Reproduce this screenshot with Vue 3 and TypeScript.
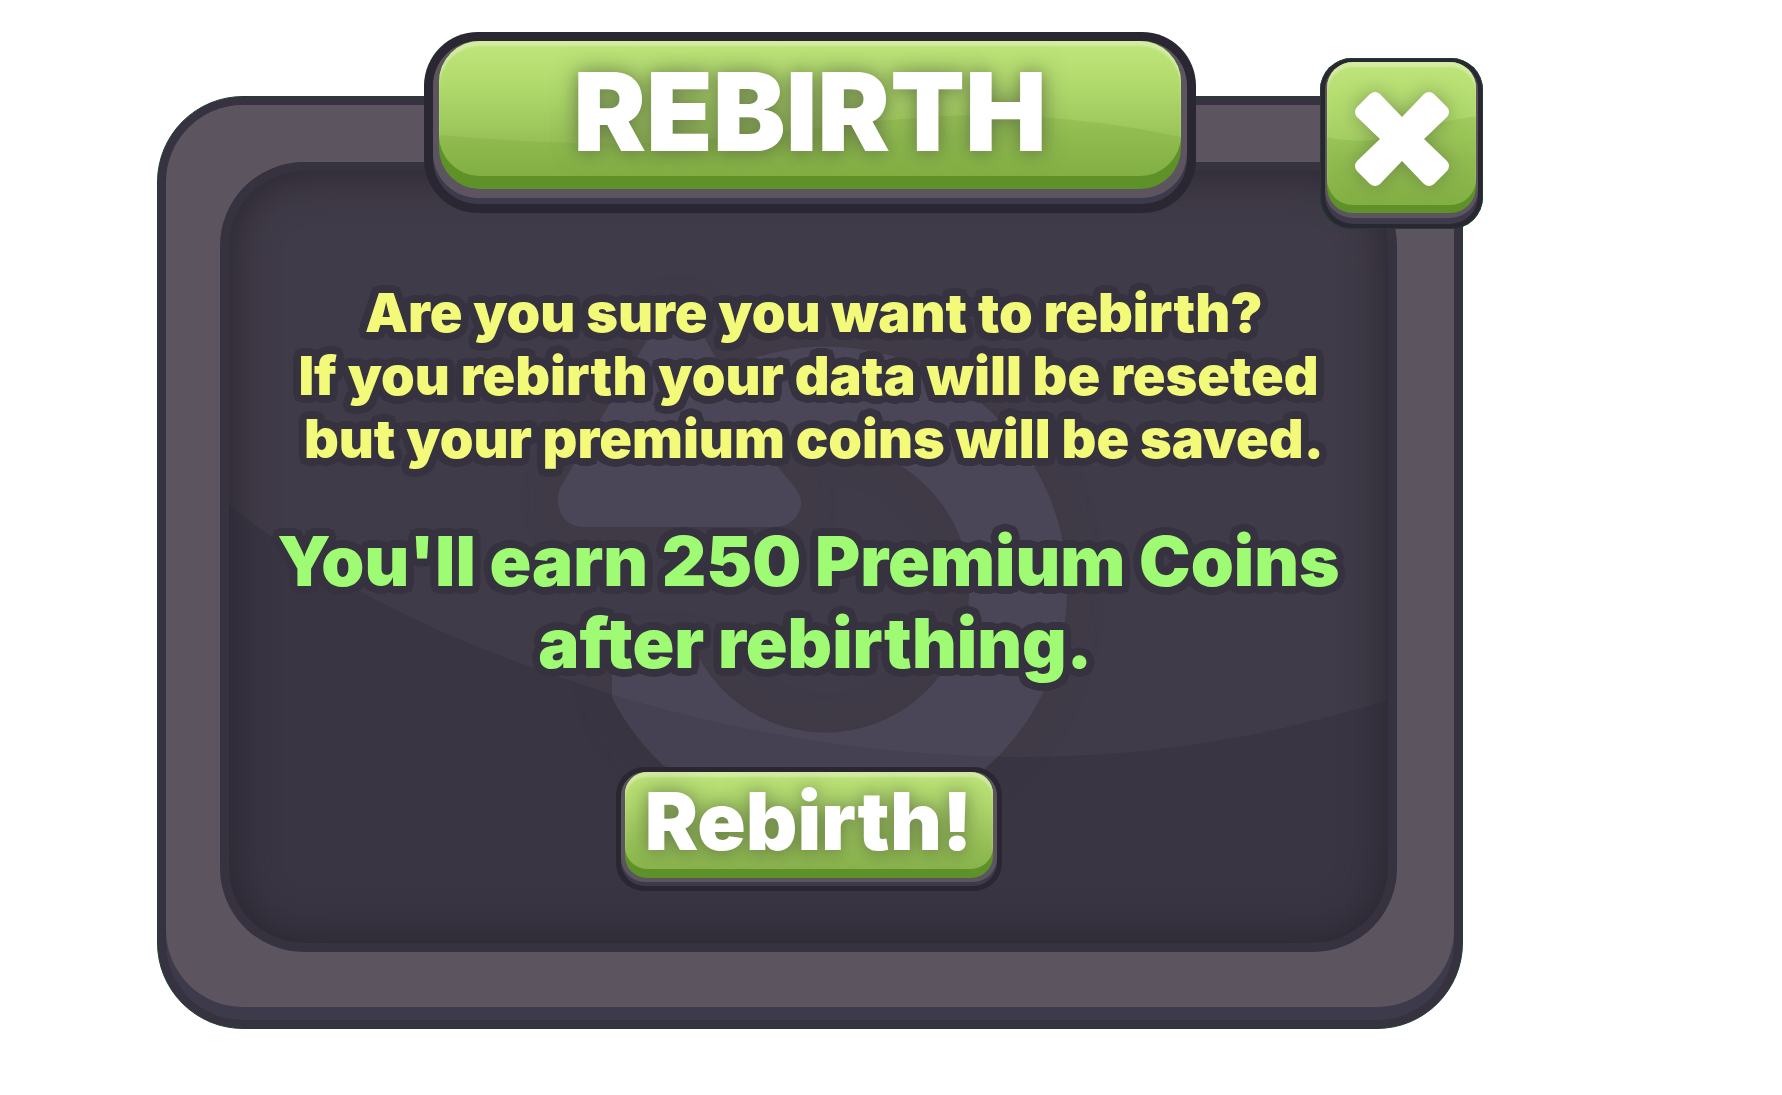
<script setup lang="ts">
import { ref } from 'vue'

const open = ref(true)
const premiumCoins = ref(250)

const warning: string[] = [
  ' Are you sure you want to rebirth?',
  'If you rebirth your data will be reseted',
  ' but your premium coins will be saved.',
]

function close(): void {
  open.value = false
}

function rebirth(): void {
  premiumCoins.value += 250
}
</script>

<template>
  <main class="page">
    <section v-if="open" class="dialog" role="dialog" aria-labelledby="dialog-title">
      <div class="frame">
        <div class="frame-lip">
          <div class="frame-face">
            <div class="well">
              <svg class="well-art" viewBox="0 0 1159 772" preserveAspectRatio="none" aria-hidden="true">
                <g class="watermark" transform="translate(-229 -171)">
                  <path d="M593 527 A241 241 0 1 1 612 698 V650 H695 A144 144 0 1 0 695 527 Z" />
                  <path
                    d="M584 527 Q566 527 560 511 Q554 496 564 481 L656 325 Q677 296 698 325 L714 355 L777 466 L794 486 Q805 500 799 512 Q792 527 774 527 Z"
                  />
                </g>
                <path
                  class="sheen"
                  d="M0 0 V334 C120 430 260 485 385 524 C520 565 660 586 794 586 C920 586 1040 566 1159 529 V0 Z"
                />
              </svg>
              <div class="content">
                <p class="warning">
                  <span v-for="line in warning" :key="line" class="line">{{ line }}</span>
                </p>
                <p class="reward">
                  <span class="line">You'll earn {{ premiumCoins }} Premium Coins</span>
                  <span class="line">{{ ' after rebirthing.' }}</span>
                </p>
                <button type="button" class="plate plate-action" @click="rebirth">
                  <span class="lip"><span class="rim"><span class="base"><span class="face">
                    <span class="label">Rebirth!</span>
                  </span></span></span></span>
                </button>
              </div>
            </div>
          </div>
        </div>
      </div>

      <header class="plate plate-title">
        <div class="lip"><div class="rim"><div class="base"><div class="face">
          <svg class="swoosh" viewBox="0 0 740 135" preserveAspectRatio="none" aria-hidden="true">
            <path d="M0 94 Q110 104 200 102 C330 98 420 76 540 74 Q640 74 740 96 V135 H0 Z" />
          </svg>
          <h1 id="dialog-title" class="label">REBIRTH</h1>
        </div></div></div></div>
      </header>

      <button type="button" class="plate plate-close" aria-label="Close" @click="close">
        <span class="lip"><span class="rim"><span class="base"><span class="face">
          <svg class="swoosh" viewBox="0 0 150 142" preserveAspectRatio="none" aria-hidden="true">
            <path d="M0 75 Q30 81 60 76 Q110 58 150 54 V142 H0 Z" />
          </svg>
          <svg class="cross" viewBox="0 0 94 94" aria-hidden="true">
            <path
              d="M15 2 Q20 -2 25 2 L47 25 L69 2 Q74 -2 79 2 L92 15 Q96 20 92 25 L69 47 L92 69 Q96 74 92 79 L79 92 Q74 96 69 92 L47 69 L25 92 Q20 96 15 92 L2 79 Q-2 74 2 69 L25 47 L2 25 Q-2 20 2 15 Z"
            />
          </svg>
        </span></span></span></span>
      </button>
    </section>
  </main>
</template>

<style>
body {
  margin: 0;
  background: #ffffff;
}
</style>

<style scoped>
.page {
  box-sizing: border-box;
  padding: 96px 319px 67px 157px;
  font-family: Inter, "Open Sans", "Liberation Sans", sans-serif;
  font-weight: 900;
}

.dialog {
  position: relative;
}

/* Outer frame */
.frame {
  padding: 8px;
  border: 1px solid #1f4030;
  border-radius: 86px;
  background: #363240;
}

.frame-lip {
  padding-bottom: 13px;
  border-radius: 77px;
  background: #3d3b4b;
}

.frame-face {
  padding: 57px 57px 55px 54px;
  border-radius: 77px;
  background: #5c5560;
}

.well {
  position: relative;
  overflow: hidden;
  border: 9px solid #36323f;
  border-radius: 84px;
  background: #3a3543;
}

.well::after {
  content: "";
  position: absolute;
  inset: 0;
  border-radius: 75px;
  box-shadow: inset 0 0 40px 4px rgba(38, 34, 42, 0.8);
  pointer-events: none;
}

.well-art {
  position: absolute;
  inset: 0;
  width: 100%;
  height: 100%;
}

.watermark {
  fill: #454052;
  filter: drop-shadow(0 0 16px rgba(54, 50, 54, 0.5));
}

.sheen {
  fill: rgba(255, 255, 255, 0.03);
}

/* Text */
.content {
  position: relative;
  z-index: 1;
  display: flex;
  flex-direction: column;
  align-items: center;
  padding: 110px 0 52px;
}

.warning,
.reward {
  margin: 0;
  text-align: center;
  white-space: pre;
  text-shadow:
    8px 0 #36323f, 7px 3px #36323f, 6px 6px #36323f, 3px 7px #36323f,
    0 8px #36323f, -3px 7px #36323f, -6px 6px #36323f, -7px 3px #36323f,
    -8px 0 #36323f, -7px -3px #36323f, -6px -6px #36323f, -3px -7px #36323f,
    0 -8px #36323f, 3px -7px #36323f, 6px -6px #36323f, 7px -3px #36323f,
    4px 0 #36323f, -4px 0 #36323f, 0 4px #36323f, 0 -4px #36323f;
}

.line {
  display: block;
}

.warning {
  color: #f3fa79;
  font-size: 54px;
  line-height: 63px;
}

.reward {
  margin-top: 50px;
  color: #a0fb74;
  font-size: 69px;
  line-height: 82px;
}

/* Raised green plates */
.plate {
  box-sizing: border-box;
  margin: 0;
  border: 0;
  background: #2a2733;
  font: inherit;
  color: #ffffff;
}

.plate span {
  display: block;
}

.plate .lip {
  background: #3d3b4b;
}

.plate .rim {
  background: #5c5560;
}

.plate .base {
  background: #5e9229;
}

.plate .face {
  position: relative;
  display: flex;
  align-items: center;
  justify-content: center;
  overflow: hidden;
  background: linear-gradient(#bfe67a, #b0d96c 35%, #97c057 75%, #8ab44c);
  box-shadow: inset 0 5px 2px rgba(225, 240, 190, 0.6);
}

.swoosh {
  position: absolute;
  inset: 0;
  width: 100%;
  height: 100%;
  fill: rgba(100, 155, 35, 0.18);
}

.plate .label {
  position: relative;
  margin: 0;
  font-weight: 900;
  white-space: nowrap;
  text-shadow: 0 0 24px rgba(85, 100, 65, 0.7), 0 2px 12px rgba(90, 110, 60, 0.3);
}

.plate-title {
  position: absolute;
  top: -64px;
  left: 267px;
  right: 267px;
  padding: 9px;
  border-radius: 54px;
}

.plate-title .lip {
  padding-bottom: 6px;
  border-radius: 45px;
}

.plate-title .rim {
  padding: 0 6px 9px;
  border-radius: 45px;
}

.plate-title .base {
  padding-bottom: 13px;
  border-radius: 41px;
}

.plate-title .face {
  box-sizing: border-box;
  height: 135px;
  padding-top: 5px;
  border-radius: 41px;
}

.plate-title .label {
  font-size: 109px;
  line-height: 130px;
}

.plate-close {
  position: absolute;
  top: -38px;
  right: -20px;
  width: 163px;
  padding: 4px 5px 5px;
  border-radius: 32px;
  cursor: pointer;
  box-shadow: inset 0 0 0 1px #1f4030;
}

.plate-close .lip {
  padding-bottom: 6px;
  border-radius: 28px;
}

.plate-close .rim {
  padding: 0 2px 5px;
  border-radius: 28px;
}

.plate-close .base {
  padding-bottom: 8px;
  border-radius: 26px;
}

.plate-close .face {
  box-sizing: border-box;
  height: 143px;
  padding-top: 11px;
  border-radius: 26px;
}

.cross {
  position: relative;
  width: 94px;
  height: 94px;
  overflow: visible;
  fill: #ffffff;
  filter: drop-shadow(0 0 10px rgba(80, 95, 60, 0.5));
}

.plate-action {
  width: 386px;
  margin-top: 83px;
  padding: 5px;
  border-radius: 28px;
  cursor: pointer;
}

.plate-action .lip {
  padding-bottom: 4px;
  border-radius: 24px;
}

.plate-action .rim {
  padding: 0 4px 4px;
  border-radius: 24px;
}

.plate-action .base {
  padding-bottom: 9px;
  border-radius: 22px;
}

.plate-action .face {
  height: 97px;
  border-radius: 22px;
}

.plate-action .label {
  font-size: 80px;
  line-height: 97px;
}
</style>
